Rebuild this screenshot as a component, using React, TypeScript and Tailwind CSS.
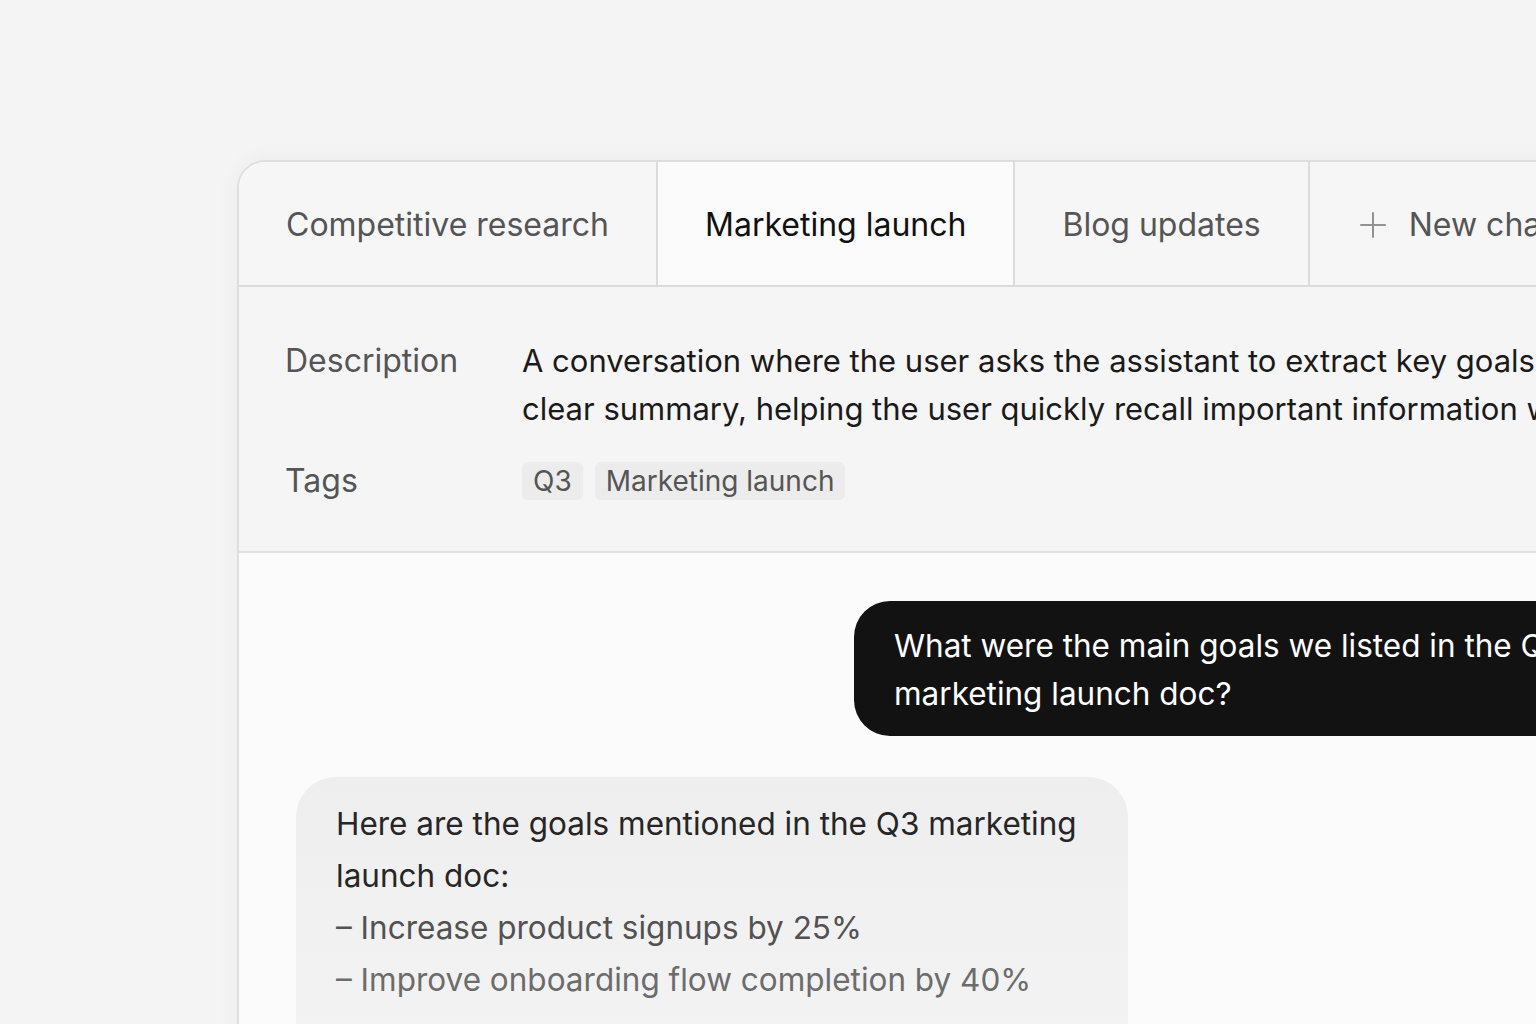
const tabs = [
  { label: "Competitive research", active: false },
  { label: "Marketing launch", active: true },
  { label: "Blog updates", active: false },
];

function PlusIcon() {
  return (
    <svg width="26" height="26" viewBox="0 0 26 26" fill="none" aria-hidden="true">
      <path d="M13 1v24M1 13h24" stroke="#929292" strokeWidth="2" strokeLinecap="round" />
    </svg>
  );
}

export default function App() {
  return (
    <div
      className="h-[1024px] w-[1536px] overflow-hidden bg-[#f4f4f4] pl-[237px] pt-[160px]"
      style={{ fontFamily: "Inter, 'Noto Sans', sans-serif" }}
    >
      <div className="w-[1456px] rounded-tl-[28px] border-2 border-[#dedede] bg-[#fbfbfb] shadow-[0_0_24px_rgba(0,0,0,0.04)]">
        {/* tabs */}
        <div className="flex h-[125px] rounded-tl-[28px] border-b-2 border-[#dcdcdc] bg-[#f6f6f6]">
          {tabs.map((t) => (
            <div
              key={t.label}
              className={
                t.active
                  ? "flex items-center border-r-2 border-[#dcdcdc] bg-[#fbfbfb] px-[47px] pt-[3px] text-[32px] text-[#111111]"
                  : "flex items-center border-r-2 border-[#dcdcdc] px-[47px] pt-[3px] text-[32px] text-[#555555]"
              }
            >
              {t.label}
            </div>
          ))}
          <div className="flex items-center gap-[23px] pl-[50px] pr-12 pt-[3px] text-[32px] text-[#555555]">
            <PlusIcon />
            <span>New chat</span>
          </div>
        </div>

        {/* details */}
        <div className="border-b-2 border-[#e2e2e2] bg-[#f5f5f5] px-[46px] pt-[50px] pb-[46px]">
          <div className="flex">
            <div className="w-[237px] shrink-0 text-[32px] leading-[48px] text-[#555555]">Description</div>
            <div className="whitespace-nowrap text-[31px] leading-[48px] text-[#1a1a1a]">
              <div>A conversation where the user asks the assistant to extract key goals from a document and present them in a</div>
              <div>clear summary, helping the user quickly recall important information without rereading.</div>
            </div>
          </div>
          <div className="mt-6 flex items-center">
            <div className="w-[237px] shrink-0 text-[32px] leading-[48px] text-[#555555]">Tags</div>
            <div className="flex gap-3">
              <span className="rounded-md bg-[#ececec] px-[11px] text-[28px] leading-[38px] text-[#555555]">Q3</span>
              <span className="rounded-md bg-[#ececec] px-[11px] text-[28px] leading-[38px] text-[#555555]">
                Marketing launch
              </span>
            </div>
          </div>
        </div>

        {/* chat */}
        <div className="flex flex-col gap-[41px] px-[57px] pt-[48px] pb-10">
          <div className="w-[780px] self-end rounded-[36px] bg-[#121212] px-10 pt-[21px] pb-[18px] text-[31.5px] leading-[48px] text-white">
            What were the main goals we listed in the Q3 marketing launch doc?
          </div>
          <div className="w-[832px] self-start rounded-[40px] bg-gradient-to-b from-[#eeeeee] to-[#f4f4f4] px-10 pt-[21px] pb-20 text-[31.5px] leading-[52px]">
            <p className="text-[#262626]">Here are the goals mentioned in the Q3 marketing launch doc:</p>
            <p className="text-[#525252]">– Increase product signups by 25%</p>
            <p className="text-[#6c6c6c]">– Improve onboarding flow completion by 40%</p>
          </div>
        </div>
      </div>
    </div>
  );
}
